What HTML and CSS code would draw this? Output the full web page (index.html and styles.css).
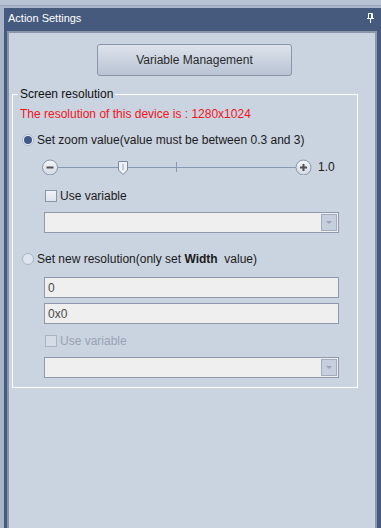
FILE: index.html
```html
<!DOCTYPE html>
<html>
<head>
<meta charset="utf-8">
<link rel="stylesheet" href="styles.css">
</head>
<body>
<div class="window">
  <div class="topstrip"></div>
  <div class="dock">
    <div class="panel">
      <div class="titlebar">
        <span class="title">Action Settings</span>
        <svg class="pin" width="7" height="10" viewBox="0 0 7 10">
          <path d="M1.5 0.5H5.5V5.5M1.5 0.5V5.5M4.5 0.5V5.5" stroke="#fff" fill="none"/>
          <path d="M0 5.5H7" stroke="#fff"/>
          <path d="M3.5 6V10" stroke="#fff"/>
        </svg>
      </div>
      <div class="content">
        <button class="btn">Variable Management</button>
        <fieldset class="group">
          <legend>Screen resolution</legend>
          <div class="body">
            <div class="row red">The resolution of this device is : 1280x1024</div>
            <div class="row radio-row r1"><span class="radio on"></span><span>Set zoom value(value must be between 0.3 and 3)</span></div>
            <div class="row slider-row">
              <svg class="slider" width="272" height="16" viewBox="0 0 272 16">
                <defs>
                  <linearGradient id="cg" x1="0" y1="0" x2="0" y2="1">
                    <stop offset="0" stop-color="#f3f5f8"/>
                    <stop offset="1" stop-color="#d3dae5"/>
                  </linearGradient>
                </defs>
                <path d="M15 8.5H254" stroke="#8798b2"/>
                <path d="M134.5 3V13" stroke="#8798b2"/>
                <circle cx="8" cy="8.5" r="7.5" fill="url(#cg)" stroke="#8793a8"/>
                <path d="M4.5 8.5H11.5" stroke="#505050" stroke-width="2"/>
                <path d="M76.5 2.5H85.5V11L81 15.5L76.5 11Z" fill="#eef1f5" stroke="#7b879c"/>
                <path d="M81 5V11" stroke="#9aa3b2"/>
                <circle cx="261.5" cy="8.5" r="7.5" fill="url(#cg)" stroke="#8793a8"/>
                <path d="M258 8.5H265M261.5 5V12" stroke="#505050" stroke-width="2"/>
              </svg>
              <span class="val">1.0</span>
            </div>
            <div class="row check-row c1"><span class="check"></span><span>Use variable</span></div>
            <div class="combo k1"><span class="arrow"><span class="tri"></span></span></div>
            <div class="row radio-row r2"><span class="radio"></span><span>Set new resolution(only set <b>Width</b>&nbsp; value)</span></div>
            <input class="field f1" type="text" value="0">
            <input class="field f2" type="text" value="0x0">
            <div class="row check-row c2 disabled"><span class="check"></span><span>Use variable</span></div>
            <div class="combo k2"><span class="arrow"><span class="tri"></span></span></div>
          </div>
        </fieldset>
      </div>
    </div>
  </div>
</div>
</body>
</html>
```

FILE: styles.css
```css
html, body {
  margin: 0;
  padding: 0;
}
body {
  font-family: "Liberation Sans", Arial, sans-serif;
  font-size: 12px;
  color: #1a1a1a;
}
.window {
  width: 381px;
  height: 528px;
  background: #a9b5c9;
  display: flex;
  flex-direction: column;
  overflow: hidden;
}
.topstrip {
  height: 5px;
  background: #b7c2d4;
  border-bottom: 1px solid #98a5bb;
  margin-bottom: 2px;
  flex: none;
}
.dock {
  flex: 1;
  display: flex;
  padding-left: 4px;
  min-height: 0;
}
.panel {
  flex: 1;
  background: #465a7e;
  display: flex;
  flex-direction: column;
}
.titlebar {
  height: 20px;
  display: flex;
  align-items: center;
  justify-content: space-between;
  padding: 0 7px 0 4px;
  flex: none;
}
.title {
  color: #fff;
  font-size: 11px;
}
.pin {
  display: block;
}
.content {
  flex: 1;
  margin: 3px 4px 0 3px;
  background: #cad3e0;
  border: 2px solid #8a96aa;
  border-bottom: none;
  display: flex;
  flex-direction: column;
  align-items: flex-start;
}
.btn {
  margin: 11px 0 0 88px;
  width: 195px;
  height: 32px;
  border: 1px solid #8995a9;
  border-radius: 3px;
  background: linear-gradient(#dde3ec, #b9c3d3);
  font-family: "Liberation Sans", Arial, sans-serif;
  font-size: 12px;
  color: #2a2a2a;
  padding: 0;
}
.group {
  margin: 11px 0 0 3px;
  width: 346px;
  box-sizing: border-box;
  border: 1px solid #ffffff;
  padding: 0 0 9px 7px;
  min-width: 0;
}
.group legend {
  padding: 0 2px;
  margin-left: -2px;
  line-height: 14px;
  font-size: 12px;
  color: #111;
}
.body {
  display: flex;
  flex-direction: column;
  align-items: flex-start;
}
.row {
  height: 16px;
  display: flex;
  align-items: center;
  white-space: nowrap;
}
.red {
  margin-top: 5px;
  color: #f5141c;
}
.radio-row.r1 { margin-top: 10px; }
.radio-row.r2 { margin-top: 18px; }
.radio {
  width: 12px;
  height: 12px;
  box-sizing: border-box;
  border-radius: 50%;
  margin: 0 3px 0 2px;
  border: 1px solid #a8b6ca;
  background: #dfe5ee;
  display: flex;
  align-items: center;
  justify-content: center;
}
.radio.on {
  background: #eef2f7;
}
.radio.on::after {
  content: "";
  width: 8px;
  height: 8px;
  border-radius: 50%;
  background: #3f5a86;
}
.radio-row b {
  font-weight: bold;
}
.slider-row {
  margin: 11px 0 0 22px;
}
.slider {
  display: block;
}
.val {
  margin-left: 4px;
  color: #1a1a1a;
}
.check-row {
  margin-left: 25px;
}
.check-row.c1 { margin-top: 13px; }
.check-row.c2 { margin-top: 9px; }
.check {
  width: 12px;
  height: 12px;
  box-sizing: border-box;
  border: 1px solid #8c97a9;
  background: linear-gradient(#f0f3f7, #dde3eb);
  margin-right: 3px;
}
.disabled {
  color: #98a2b3;
}
.disabled .check {
  border-color: #aab3c2;
  background: #d6dce6;
}
.combo {
  margin-left: 24px;
  width: 295px;
  height: 21px;
  box-sizing: border-box;
  border: 1px solid #8e99ab;
  background: #efefef;
  display: flex;
  justify-content: flex-end;
  align-items: center;
  padding-right: 1px;
}
.combo.k1 { margin-top: 8px; }
.combo.k2 { margin-top: 8px; }
.arrow {
  width: 16px;
  height: 17px;
  box-sizing: border-box;
  border: 1px solid #a3adbf;
  background: #c6cfdd;
  display: flex;
  align-items: center;
  justify-content: center;
}
.tri {
  width: 0;
  height: 0;
  border-left: 3px solid transparent;
  border-right: 3px solid transparent;
  border-top: 3px solid #9aa4b4;
}
.field {
  margin: 0 0 0 24px;
  width: 295px;
  height: 21px;
  box-sizing: border-box;
  border: 1px solid #8e99ab;
  background: #efefef;
  padding: 0 3px;
  font-family: "Liberation Sans", Arial, sans-serif;
  font-size: 12px;
  color: #4a4a4a;
  outline: none;
}
.field.f1 { margin-top: 10px; }
.field.f2 { margin-top: 5px; }
```
